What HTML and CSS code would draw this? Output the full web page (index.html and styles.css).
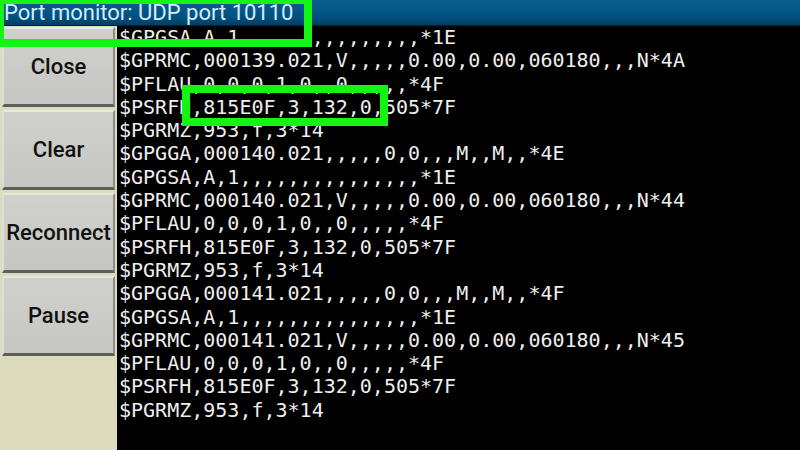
FILE: index.html
```html
<!DOCTYPE html>
<html lang="en">
<head>
    <meta charset="UTF-8">
    <meta name="viewport" content="width=device-width, initial-scale=1.0">
    <title>Port monitor</title>
    <link rel="stylesheet" href="styles.css">
</head>
<body>
    <div class="title-bar">Port monitor: UDP port 10110</div>
    <div class="main">
        <div class="side">
            <div class="btn">Close</div>
            <div class="btn">Clear</div>
            <div class="btn">Reconnect</div>
            <div class="btn">Pause</div>
        </div>
        <div class="log">
            <div class="line">$GPGSA,A,1,,,,,,,,,,,,,,,*1E</div>
            <div class="line">$GPRMC,000139.021,V,,,,,0.00,0.00,060180,,,N*4A</div>
            <div class="line">$PFLAU,0,0,0,1,0,,0,,,,,*4F</div>
            <div class="line">$PSRFH,815E0F,3,132,0,505*7F</div>
            <div class="line">$PGRMZ,953,f,3*14</div>
            <div class="line">$GPGGA,000140.021,,,,,0,0,,,M,,M,,*4E</div>
            <div class="line">$GPGSA,A,1,,,,,,,,,,,,,,,*1E</div>
            <div class="line">$GPRMC,000140.021,V,,,,,0.00,0.00,060180,,,N*44</div>
            <div class="line">$PFLAU,0,0,0,1,0,,0,,,,,*4F</div>
            <div class="line">$PSRFH,815E0F,3,132,0,505*7F</div>
            <div class="line">$PGRMZ,953,f,3*14</div>
            <div class="line">$GPGGA,000141.021,,,,,0,0,,,M,,M,,*4F</div>
            <div class="line">$GPGSA,A,1,,,,,,,,,,,,,,,*1E</div>
            <div class="line">$GPRMC,000141.021,V,,,,,0.00,0.00,060180,,,N*45</div>
            <div class="line">$PFLAU,0,0,0,1,0,,0,,,,,*4F</div>
            <div class="line">$PSRFH,815E0F,3,132,0,505*7F</div>
            <div class="line">$PGRMZ,953,f,3*14</div>
        </div>
    </div>

    <!-- highlight marks drawn over the screenshot -->
    <div class="mark mark-title"></div>
    <div class="mark mark-field"></div>
</body>
</html>
```

FILE: styles.css
```css
body {
    margin: 0;
    height: 450px;
    overflow: hidden;
    background-color: #000;
    font-family: Roboto, "Liberation Sans", sans-serif;
    position: relative;
}
.title-bar {
    height: 26px;
    line-height: 25px;
    padding-left: 4px;
    box-sizing: border-box;
    font-size: 22px;
    color: #d4ecfa;
    background: linear-gradient(#0a5f90, #00507e 70%, #003e62);
    border-bottom: 1px solid #002236;
    white-space: nowrap;
}
.main {
    display: flex;
    height: 424px;
}
.side {
    width: 117px;
    flex-shrink: 0;
    box-sizing: border-box;
    padding: 1px 2px 0 2px;
    background-color: #dcdcbc;
}
.btn {
    height: 80px;
    margin-bottom: 3px;
    box-sizing: border-box;
    display: flex;
    justify-content: center;
    align-items: center;
    background: linear-gradient(#d0d0cc, #c6c6c2);
    border-top: 2px solid #e6e6e2;
    border-left: 2px solid #dededa;
    border-right: 2px solid #8c8c88;
    border-bottom: 3px solid #5e5e5c;
    font-size: 22px;
    font-weight: 500;
    color: #111;
}
.log {
    flex: 1;
    padding-left: 2px;
    font-family: "DejaVu Sans Mono", monospace;
    font-size: 20px;
    line-height: 23.3px;
    color: #eeeeee;
}
.line {
    white-space: nowrap;
}
.mark {
    position: absolute;
    border: 8px solid #14f514;
}
.mark-title {
    left: -4px;
    top: -4px;
    width: 300px;
    height: 35px;
}
.mark-field {
    left: 182px;
    top: 85px;
    width: 190px;
    height: 25px;
}
```
